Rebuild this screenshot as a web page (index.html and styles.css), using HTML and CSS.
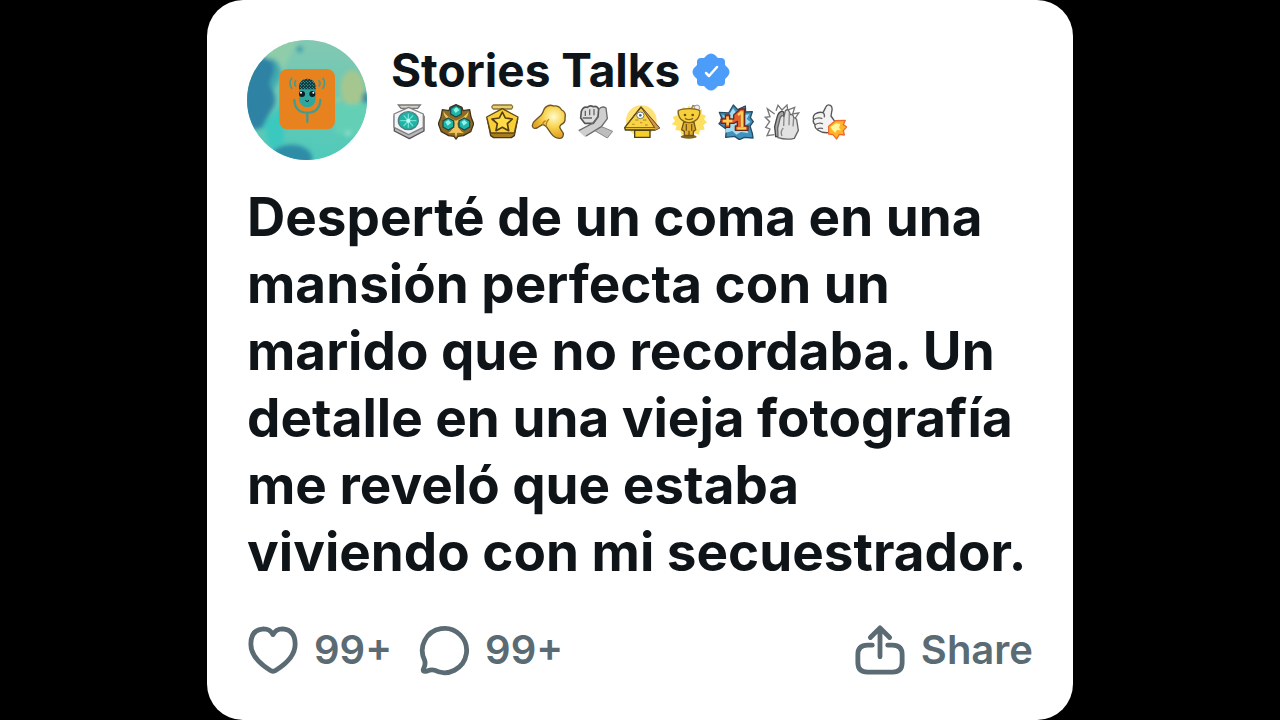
FILE: index.html
```html
<!DOCTYPE html>
<html lang="es">
<head>
    <meta charset="UTF-8">
    <meta name="viewport" content="width=device-width, initial-scale=1">
    <title>Stories Talks</title>
    <link rel="stylesheet" href="styles.css">
</head>
<body>

<article class="card">
    <header class="card_header">
        <svg class="avatar" viewBox="0 0 360 360" aria-hidden="true">
            <defs>
                <linearGradient id="sky" x1="0" y1="0" x2="0" y2="1">
                    <stop offset="0" stop-color="#84c8b2"/>
                    <stop offset=".5" stop-color="#68c8b5"/>
                    <stop offset="1" stop-color="#4fcaba"/>
                </linearGradient>
                <filter id="soft"><feGaussianBlur stdDeviation="7"/></filter>
                <pattern id="mesh" width="9" height="9" patternUnits="userSpaceOnUse">
                    <rect width="9" height="9" fill="#12323a"/>
                    <circle cx="2" cy="2" r="2" fill="#2fa79f"/>
                    <circle cx="7" cy="7" r="2" fill="#2fa79f"/>
                </pattern>
            </defs>
            <rect width="360" height="360" fill="url(#sky)"/>
            <g filter="url(#soft)">
                <path d="M60 0h92L132 40 110 90H60z" fill="#8fcdaa"/>
                <path d="M-10 70Q50 40 76 64Q88 78 80 98L68 132Q96 180 76 206Q60 230 48 262L20 270-10 240z" fill="#2f82a4"/>
                <path d="M70 50Q110 70 100 110L80 150 68 130 84 90z" fill="#3fa9af"/>
                <ellipse cx="316" cy="145" rx="36" ry="54" fill="#a5c78f"/>
                <path d="M264 200Q310 184 370 198V290L264 280z" fill="#63d0b6"/>
                <path d="M50 250L110 190V310L70 330z" fill="#3bc8bf"/>
                <ellipse cx="132" cy="356" rx="64" ry="42" fill="#2d8ca7"/>
                <path d="M346 162L370 150V194L344 184z" fill="#3d8fa1"/>
                <circle cx="158" cy="28" r="9" fill="#3d9ba7"/>
                <circle cx="303" cy="281" r="8" fill="#8fe0cc"/>
                <circle cx="274" cy="180" r="8" fill="#94d2a4"/>
            </g>
            <rect x="97" y="87" width="167" height="181" rx="24" fill="#e8821e"/>
            <rect x="156" y="116" width="50" height="86" rx="25" fill="#2fa79f"/>
            <path d="M156 148v-7a25 25 0 0 1 50 0v7z" fill="url(#mesh)"/>
            <g fill="none" stroke="#459b8d" stroke-width="6" stroke-linecap="round">
                <path d="M142 180q2 38 39 38t39-38M181 218v27" stroke-width="7"/>
                <path d="M146 122q-6 8 0 16M134 115q-10 14 0 30M216 122q6 8 0 16M228 115q10 14 0 30" stroke-width="5"/>
            </g>
            <circle cx="165" cy="162" r="9" fill="#101b20"/>
            <circle cx="196" cy="162" r="9" fill="#101b20"/>
            <circle cx="162" cy="158" r="3" fill="#fff"/>
            <circle cx="199" cy="158" r="3" fill="#fff"/>
            <path d="M175 181q5 8 11 0" fill="none" stroke="#101b20" stroke-width="3"/>
        </svg>

        <div class="profile">
            <div class="profile_name">
                <h2>Stories Talks</h2>
                <svg class="verified" viewBox="0 0 38 38" aria-hidden="true">
                    <path d="M15 2q4-3 8 0l3 3h3q4 0 4 4v3l3 3q3 4 0 8l-3 3v3q0 4-4 4h-3l-3 3q-4 3-8 0l-3-3H9q-4 0-4-4v-3l-3-3q-3-4 0-8l3-3V9q0-4 4-4h3z" fill="#4c9df9"/>
                    <path d="M14 20l3 3 8-9" fill="none" stroke="#fff" stroke-width="2.500" stroke-linecap="round" stroke-linejoin="round"/>
                </svg>
            </div>

            <div class="awards" aria-hidden="true">
                <!-- silver medal -->
                <svg class="award" viewBox="0 0 108 108">
                    <path d="M22 3h66l-8 10H30z" fill="#d8d2c4" stroke="#777" stroke-width="4"/>
                    <path d="M55 18l44 18v45l-44 23-45-23V36z" fill="#b9b9bd" stroke="#555" stroke-width="4" stroke-linejoin="round"/>
                    <path d="M53 10l44 20v40L53 92 9 70V30z" fill="#f4f4f6" stroke="#808084" stroke-width="4" stroke-linejoin="round"/>
                    <ellipse cx="52" cy="50" rx="30" ry="27" fill="#1fb3a5" stroke="#4f7f80" stroke-width="4"/>
                    <path d="M52 29v42M28 50h48M38 34l28 32M66 34L38 66" fill="none" stroke="#6fe0d2" stroke-width="4"/>
                    <circle cx="52" cy="50" r="6" fill="#c4fff4"/>
                </svg>
                <!-- three gems -->
                <svg class="award" viewBox="0 0 108 108">
                    <path d="M36 10L54 2l18 8 3 10 20-3 4 22 8 20-9 24-22 12-16 2-6 8-6-8-16-2-22-12L1 59l8-20 4-22 20 3z" fill="#8f6a24" stroke="#43351c" stroke-width="4" stroke-linejoin="round"/>
                    <path d="M16 22q12 20 38 28 26-8 38-28-2 28-34 34 0 18 20 32l-20-2-4 16-4-16-20 2q20-14 20-32-32-6-34-34z" fill="#f0c45a"/>
                    <g fill="#1fb5a8" stroke="#1f4c4a" stroke-width="4">
                        <path d="M54 4l16 9v17L54 39 38 30V13z"/>
                        <path d="M31 42l16 9v18l-16 9-16-9V51z"/>
                        <path d="M79 42l16 9v18l-16 9-16-9V51z"/>
                    </g>
                    <path d="M46 17l9-7 9 8-11 9zM22 54l9-6 9 8-11 9zM70 54l9-6 9 8-11 9z" fill="#8ef5e6"/>
                </svg>
                <!-- gold star medal -->
                <svg class="award" viewBox="0 0 108 108">
                    <path d="M28 3h54q8 6 0 12H28q-9-6 0-12z" fill="#e8cf74" stroke="#8d7434" stroke-width="4"/>
                    <path d="M10 45l45-26 46 26-10 50-9 6H29l-9-6z" fill="#a87c20" stroke="#4c3913" stroke-width="4" stroke-linejoin="round"/>
                    <path d="M55 14l47 25-11 48H20L8 39z" fill="#f8cf36" stroke="#5e4716" stroke-width="4" stroke-linejoin="round"/>
                    <path d="M55 24l9 18 21 3-15 14 4 21-19-10-19 10 4-21-16-14 22-3z" fill="#ffdc48" stroke="#533d15" stroke-width="5" stroke-linejoin="round"/>
                </svg>
                <!-- pointing hand -->
                <svg class="award" viewBox="0 0 108 108">
                    <defs>
                        <radialGradient id="hand" cx=".65" cy=".35" r=".6">
                            <stop offset="0" stop-color="#fffbd0"/>
                            <stop offset=".5" stop-color="#f9d552"/>
                            <stop offset="1" stop-color="#e2a428"/>
                        </radialGradient>
                    </defs>
                    <path d="M40 14Q52-1 68 6Q84 4 92 18Q106 24 102 42Q104 56 90 62Q84 68 88 74L97 88Q98 104 84 103Q70 102 60 88L46 68Q40 62 34 62L18 72Q4 76 4 64Q4 56 14 48L30 34Q36 26 40 14z" fill="url(#hand)" stroke="#6b5526" stroke-width="4" stroke-linejoin="round"/>
                    <path d="M46 68q-2-14 8-22M34 62q2-8 10-12" fill="none" stroke="#b58426" stroke-width="4"/>
                </svg>
                <!-- clasped hands -->
                <svg class="award" viewBox="0 0 108 108">
                    <path d="M38 54l66 28-16 20-58-34z" fill="#bdbdbd" stroke="#8a8a8a" stroke-width="3"/>
                    <path d="M2 82l42-24 16-20 6-24q8-10 18-4l4 34-18 26-48 30z" fill="#cfcfcf"/>
                    <path d="M10 22Q16 6 28 10 36 2 46 8 58 4 62 16L60 38 46 58 20 58 8 42z" fill="#dedede" stroke="#555" stroke-width="5" stroke-linejoin="round"/>
                    <path d="M62 16Q72 4 84 12L88 44 70 68 24 96M60 38L44 58 2 80" fill="none" stroke="#6c6c6c" stroke-width="4"/>
                    <path d="M22 20v16M35 16v18M48 15v19M14 42h28" fill="none" stroke="#666" stroke-width="4"/>
                </svg>
                <!-- pyramid -->
                <svg class="award" viewBox="0 0 108 108">
                    <circle cx="52" cy="50" r="46" fill="#ffe17a"/>
                    <path d="M32 78h46v22H32z" fill="#f6cf28" stroke="#4d4018" stroke-width="4"/>
                    <path d="M51 9l55 63-12 6H4l-2-7z" fill="#f8d343" stroke="#493b19" stroke-width="4" stroke-linejoin="round"/>
                    <path d="M51 9l55 63-12 6z" fill="#d99445"/>
                    <path d="M51 9L2 71h90z" fill="none" stroke="#6b5017" stroke-width="3"/>
                    <ellipse cx="49" cy="34" rx="11" ry="10" fill="#fff" stroke="#777" stroke-width="3"/>
                    <circle cx="49" cy="34" r="4" fill="#426981"/>
                    <path d="M34 48h9m14 0h10M24 61h8m16-5h7m8 7h8" stroke="#c59a2c" stroke-width="4"/>
                </svg>
                <!-- golden figure -->
                <svg class="award" viewBox="0 0 108 108">
                    <path d="M54 5l8 8 12-6 4 11 15-2-1 14 13 5-6 11 9 9-11 8 4 14-14 1-3 14-14-4-12 10-12-10-14 5-4-13-15-2 4-13L2 61l10-10L5 39l14-5-1-15 14 2 5-12 10 5z" fill="#ffdf60"/>
                    <path d="M59 18l7-13 13 4" fill="none" stroke="#967a35" stroke-width="4"/>
                    <circle cx="78" cy="11" r="8" fill="#eee" stroke="#999" stroke-width="3"/>
                    <ellipse cx="53" cy="98" rx="24" ry="6" fill="#80621f"/>
                    <path d="M38 55h31l5 22-7 5v12H40V82l-8-5z" fill="#dfab2b" stroke="#70541a" stroke-width="4"/>
                    <path d="M46 60v20M62 60v20M54 80v14" stroke="#765719" stroke-width="4"/>
                    <path d="M22 20q10-6 32-6t32 6q2 14-8 26-10 10-24 10T30 46Q20 34 22 20z" fill="#f6d03c" stroke="#82631e" stroke-width="4"/>
                    <circle cx="42" cy="33" r="4" fill="#6d5018"/>
                    <circle cx="65" cy="33" r="4" fill="#6d5018"/>
                    <path d="M42 43q12 8 24 0" fill="none" stroke="#866215" stroke-width="4"/>
                </svg>
                <!-- plus one -->
                <svg class="award" viewBox="0 0 108 108">
                    <path d="M46 3l13 14 23-11 1 18 20-1-6 18 9 12-10 13 7 22 2 14-26-2-15 7-14-10-27 3 2-24L3 59l10-12L4 25l28 2z" fill="#3f92bd" stroke="#244e64" stroke-width="4" stroke-linejoin="round"/>
                    <path d="M45 13l10 14 22-11-1 17 18-2-8 14 11 9-14 10 8 24-22-4-14 8-12-11-21 5 4-21-14-9 12-8-12-14 20 2z" fill="#a6dcee"/>
                    <path d="M22 33h13v12h12V33l20-18h13v51h10v13H52V66h6V52l-11 6H35v12H22V58H9V45h13z" fill="#e4602a" stroke="#6b281f" stroke-width="4" stroke-linejoin="round"/>
                    <path d="M29 38v26M15 51h28M72 22v47M60 33l12-10M58 73h26" stroke="#ffd056" stroke-width="7"/>
                </svg>
                <!-- clapping hands -->
                <svg class="award" viewBox="0 0 108 108">
                    <path d="M32 30L10 14l8 24-14 2 13 13L5 70l13 5-9 20 22-3M36 20l6-16 12 14L69 3l2 15 21-8-6 20 18-3-12 18" fill="none" stroke="#777" stroke-width="4"/>
                    <path d="M35 98l-3-30 6-24Q42 24 53 22q7-1 7 8l-10 68z" fill="#a8a8a8" stroke="#444" stroke-width="4"/>
                    <path d="M42 101l-1-29 8-32q6-9 11-2l4-18q9-7 12 4l3 8q9-3 10 9 9 0 10 12l4 26-12 24q-24 6-49-2z" fill="#e2e2e2" stroke="#666" stroke-width="4" stroke-linejoin="round"/>
                    <path d="M60 38l-1 28M76 26l-1 38M89 41l-2 26M54 96q-6-14 4-24" fill="none" stroke="#888" stroke-width="4"/>
                </svg>
                <!-- rocket thumb -->
                <svg class="award" viewBox="0 0 108 108">
                    <path d="M12 30Q24 22 36 26L44 10Q48 0 58 4Q66 8 62 24L60 36 74 56 52 86Q34 88 20 78 10 72 12 62 4 54 8 46 4 38 12 30z" fill="#f3f3f3" stroke="#555" stroke-width="4" stroke-linejoin="round"/>
                    <path d="M8 46q14-8 26-2M12 62q14-8 24-2M18 76q10-6 18-2M36 26q6 4 4 14" fill="none" stroke="#666" stroke-width="4"/>
                    <path d="M53 67l20-17 30-1-6 13 10 7-10 11 3 13-15-2-8 14-11-13-13-2z" fill="#ffb52a" stroke="#f26a2b" stroke-width="4" stroke-linejoin="round"/>
                    <path d="M59 69l16-11 13 2-4 11 6 8-12-1-5 8-9-8z" fill="#fff79a"/>
                </svg>
            </div>
        </div>
    </header>

    <h1 class="card_title">Desperté de un coma en una mansión perfecta con un marido que no recordaba. Un detalle en una vieja fotografía me reveló que estaba viviendo con mi secuestrador.</h1>

    <footer class="card_footer">
        <button class="action" type="button" aria-label="Like 99+">
            <svg class="action_icon" viewBox="-1 -1 54 54" aria-hidden="true">
                <path d="M26 10Q23 4 16 4 3 5 3 20c0 13 12 22 20 27q3 2 6 0c8-5 20-14 20-27Q49 5 36 4q-7 0-10 6z"/>
            </svg>
            <span>99+</span>
        </button>
        <button class="action" type="button" aria-label="Comment 99+">
            <svg class="action_icon" viewBox="-1 -1 54 54" aria-hidden="true">
                <path d="M6 37A23 23 0 1 1 16 47Q13 46 8 48 3 49 5 45 7 41 6 37z"/>
            </svg>
            <span>99+</span>
        </button>
        <button class="action action_share" type="button">
            <svg class="action_icon" viewBox="-1 -1 54 54" aria-hidden="true">
                <path d="M18 21h-5q-10 0-10 10v8q0 10 10 10h26q10 0 10-10v-8q0-10-10-10h-5M26 33V4M16 13L26 3l10 10"/>
            </svg>
            <span>Share</span>
        </button>
    </footer>
</article>

</body>
</html>
```
FILE: styles.css
```css
* {
    margin: 0;
    padding: 0;
    box-sizing: border-box;
}

body {
    background-color: #000;
    font-family: Inter, "Liberation Sans", sans-serif;
    color: #0f1419;
}

.card {
    display: flex;
    flex-direction: column;
    max-width: 866px;
    min-height: 100vh;
    margin: 0 auto;
    padding: 40px;
    border-radius: 36px;
    background-color: #fff;
}

.card_header {
    display: flex;
    gap: 24px;
}

.avatar {
    flex: none;
    width: 120px;
    height: 120px;
    border-radius: 50%;
}

.profile_name {
    display: flex;
    align-items: center;
    gap: 12px;
    height: 64px;
}

.profile_name h2 {
    padding-bottom: 4px;
    font-size: 46px;
    font-weight: 700;
    line-height: 60px;
}

.verified {
    width: 38px;
    height: 38px;
}

.awards {
    display: flex;
    justify-content: space-between;
    width: 456px;
}

.award {
    width: 36px;
    height: 36px;
}

.card_title {
    margin-top: 24px;
    font-size: 53px;
    font-weight: 700;
    line-height: 67px;
}

.card_footer {
    display: flex;
    align-items: center;
    gap: 26px;
    margin-top: auto;
}

.action {
    display: flex;
    align-items: center;
    gap: 15px;
    border: none;
    background: none;
    color: #5b6b73;
    font-family: inherit;
    font-size: 40px;
    font-weight: 600;
    line-height: 60px;
    cursor: pointer;
}

.action:hover {
    color: #0f1419;
}

.action_share {
    margin-left: auto;
}

.action_icon {
    width: 52px;
    height: 52px;
    fill: none;
    stroke: currentColor;
    stroke-width: 5;
    stroke-linecap: round;
    stroke-linejoin: round;
}
```
